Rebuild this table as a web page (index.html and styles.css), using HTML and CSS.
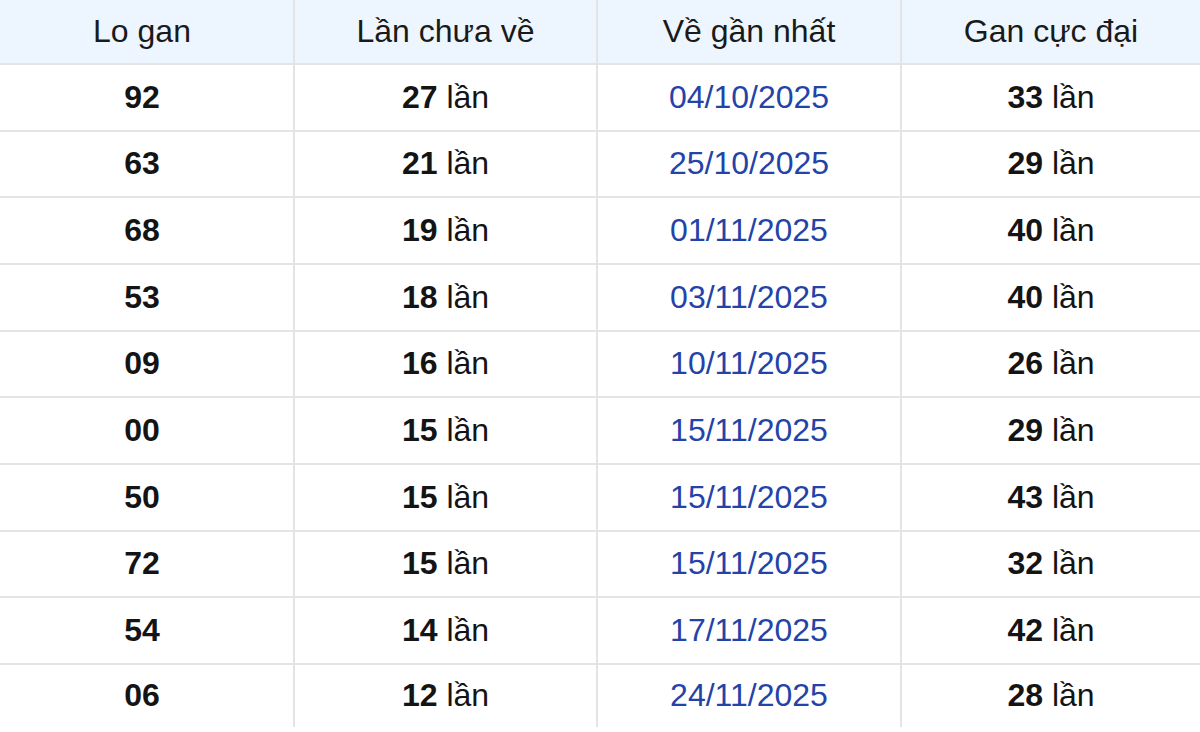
FILE: index.html
```html
<!DOCTYPE html>
<html lang="vi">
<head>
<meta charset="utf-8">
<title>Lo gan</title>
<link rel="stylesheet" href="styles.css">
</head>
<body>
<div class="table">
  <div class="cell head">Lo gan</div>
  <div class="cell head">Lần chưa về</div>
  <div class="cell head">Về gần nhất</div>
  <div class="cell head last">Gan cực đại</div>

  <div class="cell"><b>92</b></div><div class="cell"><b>27</b> lần</div><div class="cell date">04/10/2025</div><div class="cell last"><b>33</b> lần</div>
  <div class="cell"><b>63</b></div><div class="cell"><b>21</b> lần</div><div class="cell date">25/10/2025</div><div class="cell last"><b>29</b> lần</div>
  <div class="cell"><b>68</b></div><div class="cell"><b>19</b> lần</div><div class="cell date">01/11/2025</div><div class="cell last"><b>40</b> lần</div>
  <div class="cell"><b>53</b></div><div class="cell"><b>18</b> lần</div><div class="cell date">03/11/2025</div><div class="cell last"><b>40</b> lần</div>
  <div class="cell"><b>09</b></div><div class="cell"><b>16</b> lần</div><div class="cell date">10/11/2025</div><div class="cell last"><b>26</b> lần</div>
  <div class="cell"><b>00</b></div><div class="cell"><b>15</b> lần</div><div class="cell date">15/11/2025</div><div class="cell last"><b>29</b> lần</div>
  <div class="cell"><b>50</b></div><div class="cell"><b>15</b> lần</div><div class="cell date">15/11/2025</div><div class="cell last"><b>43</b> lần</div>
  <div class="cell"><b>72</b></div><div class="cell"><b>15</b> lần</div><div class="cell date">15/11/2025</div><div class="cell last"><b>32</b> lần</div>
  <div class="cell"><b>54</b></div><div class="cell"><b>14</b> lần</div><div class="cell date">17/11/2025</div><div class="cell last"><b>42</b> lần</div>
  <div class="cell bottom"><b>06</b></div><div class="cell bottom"><b>12</b> lần</div><div class="cell bottom date">24/11/2025</div><div class="cell bottom last"><b>28</b> lần</div>
</div>
</body>
</html>
```

FILE: styles.css
```css
html, body {
  margin: 0;
  padding: 0;
  background: #ffffff;
  overflow: hidden;
}

.table {
  display: grid;
  grid-template-columns: 304px 303px 304px 1fr;
  grid-template-rows: 65px repeat(9, 66.67px) 62px;
  width: 1209px;
  margin-left: -9px;
  font-family: "Liberation Sans", Arial, sans-serif;
  font-size: 32px;
  color: #141414;
}

.cell {
  display: flex;
  align-items: center;
  justify-content: center;
  border-right: 2px solid #e4e4e4;
  border-bottom: 2px solid #e4e4e4;
  white-space: pre;
}

.cell b {
  font-weight: 700;
}

.head {
  background: #edf6fe;
  color: #1a1a1a;
}

.last {
  border-right: none;
}

.bottom {
  border-bottom: none;
}

.date {
  color: #2443a8;
}
```
